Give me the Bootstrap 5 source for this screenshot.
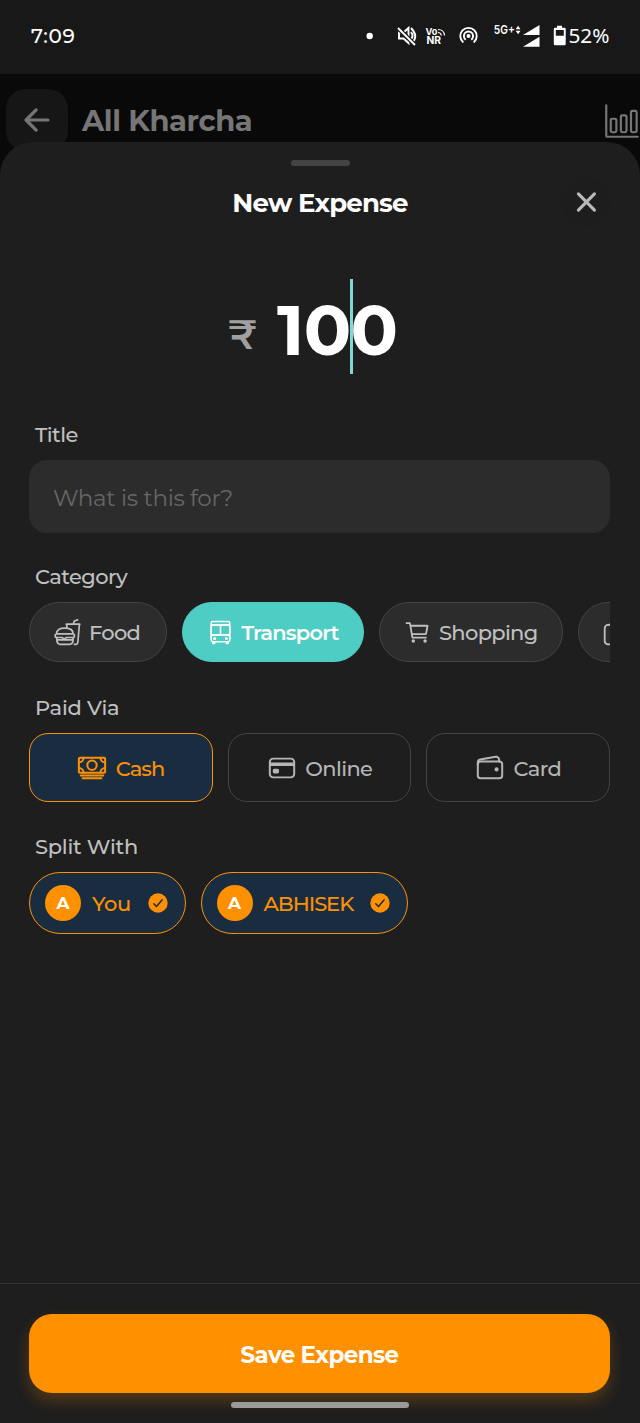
<!DOCTYPE html>
<html lang="en">
<head>
<meta charset="utf-8">
<meta name="viewport" content="width=device-width, initial-scale=1">
<title>New Expense</title>
<link href="https://cdn.jsdelivr.net/npm/bootstrap@5.3.0/dist/css/bootstrap.min.css" rel="stylesheet">
<style>
  body{background:#090909;font-family:Montserrat,Inter,"Noto Sans",sans-serif;color:#c0c0c0;width:640px;height:1423px;overflow:hidden}
  svg{display:block;flex:none}
  .ico{fill:none;stroke:currentColor;stroke-width:34;stroke-linecap:round;stroke-linejoin:round}
  .statusbar{height:74px;background:#181818;color:#fff;font-size:20px;line-height:24px;padding:14px 20px 0 31px}
  .clock{letter-spacing:.65px;font-weight:500;padding-top:10px}
  .topbar{height:68px;padding:15px 0 0 6px;color:#767676}
  .back{width:62px;height:62px;border-radius:20px;background:#161616;color:#767676}
  .page-title{font-size:29px;line-height:64px;font-weight:700;margin-left:14px;letter-spacing:-.38px}
  .sheet{background:#1e1e1e;border-radius:33px 33px 0 0;position:relative}
  .handle{width:59px;height:6px;border-radius:3px;background:#444;margin:18px auto 0}
  .sheet-head{height:48px;margin:12px 30px 0}
  .sheet-title{font-size:26px;line-height:51px;font-weight:700;color:#fff;letter-spacing:-.8px}
  .closer{width:48px;height:48px;background:#1d1d1d;color:#b9b9b9}
  .amount{height:96px;margin-top:53px;padding-left:228px;color:#fff}
  .rupee{font-size:41px;font-weight:600;color:#a0a0a0;line-height:96px;width:49px;padding-top:7px}
  .digits{font-size:70px;line-height:103px;font-weight:700;letter-spacing:-.7px}
  .caret{width:3px;height:95px;background:#80d8d0;top:0}
  .form-area{padding:0 30px 0 29px}
  .lbl{font-size:21px;line-height:30px;font-weight:500;margin:0 0 10px 6px;display:block;letter-spacing:-.55px}
  .lbl.loose{letter-spacing:-.25px}
  .field{height:73px;border-radius:18px;background:#2c2c2c!important;border:0;padding:2px 24px 0;font-size:23px;letter-spacing:-.33px}
  .field::placeholder{color:#666;opacity:1}
  .chips{gap:15px}
  .chip{height:60px;border:1.5px solid #444;background:#2c2c2c;border-radius:30px;padding:1px 0 0 24px;gap:8px;font-size:21px;font-weight:500;color:#c0c0c0;flex:none;letter-spacing:-.68px}
  .chip span{position:relative;top:.5px}
  .pay span{position:relative;top:1px}
  .chip.on{background:#4ecdc4;border-color:#4ecdc4;color:#fff;font-weight:600;letter-spacing:-.78px}
  .pays{gap:15px}
  .pay{height:69px;border:1.5px solid #444;border-radius:19px;gap:8.5px;font-size:21px;font-weight:500;color:#b5b5b5;flex:1 1 0;letter-spacing:-.6px}
  .pay.on,.person{background:#1a2d40;border-color:#ff9100;color:#ff9100}
  .pay.on{letter-spacing:-.9px}
  .person{height:62px;border:1.5px solid #ff9100;border-radius:31px;padding:0 17px 0 15px;font-size:21px;font-weight:500}
  .person .nm{padding-top:1px;letter-spacing:-.3px}
  .person .nm.caps{letter-spacing:-1.05px}
  .avatar{width:36px;height:36px;background:#ff9100;color:#fff;font-size:17px;font-weight:700;margin-right:11px;padding-top:1px}
  .footer-bar{height:140px;border-top:1.5px solid #303030;padding:30px 30px 0 29px}
  .save{height:79px;border-radius:23px;background:#ff9100!important;border:0;color:#fff!important;font-size:23px;font-weight:700;letter-spacing:-.58px;padding:9px 0 6px;box-shadow:0 8px 16px rgba(255,145,0,.24)}
  .homebar{width:178px;height:6px;border-radius:3px;background:#9b9a99;margin:9px auto 0;position:relative;left:.5px}
</style>
</head>
<body class="d-flex flex-column">
<header class="statusbar d-flex flex-shrink-0">
  <span class="clock">7:09</span>
  <svg class="ms-auto" width="254" height="44" viewBox="366 14 254 44" fill="#fff">
    <circle cx="369.7" cy="36" r="3.2"/>
    <g fill="none" stroke="#fff" stroke-width="1.9">
      <path d="M399 32.500h4.500l5-4.500v15l-5-4.500H399z"/>
      <path d="M411 32q3 4 0 7M411 28q8 8 1 15"/>
      <path d="M398 28l17 17" stroke="#181818" stroke-width="4.500"/>
      <path d="M398 28l17 17"/>
      <path d="M463.300 42.400a8.200 8.200 0 1 1 10.400 0M465.700 39.700a4.600 4.600 0 1 1 5.600 0"/>
    </g>
    <circle cx="468.5" cy="36" r="2"/>
    <g font-family="Inter,sans-serif" font-weight="700">
      <text x="425.5" y="34.600" font-size="9.3" textLength="12" lengthAdjust="spacingAndGlyphs">Vo</text>
      <text x="426.400" y="44.300" font-size="9.800" textLength="14.500" lengthAdjust="spacingAndGlyphs">NR</text>
      <text x="493.800" y="34.200" font-size="12" font-weight="600" textLength="21" lengthAdjust="spacingAndGlyphs">5G+</text>
    </g>
    <path d="M438 29.500q6 0 6.500 6M438 32.500q3 0 3.300 3" fill="none" stroke="#fff" stroke-width="1.200"/>
    <path d="M515.700 29.200l2.400-3.400 2.400 3.400zM515.700 30.800l2.400 3.400 2.400-3.400zM523 35h16.500V25zM523 46.800h16.500V36.800z"/>
    <path d="M557 25.700h5v2h2.500q1.200 0 1.200 1.200V44q0 1.200-1.200 1.200h-9.500q-1.200 0-1.200-1.200V28.900q0-1.200 1.200-1.200h2zM555.800 30v5.800h8V30z" fill-rule="evenodd"/>
    <text x="568.500" y="43.200" font-size="20" font-family="Noto Sans,sans-serif" textLength="41" lengthAdjust="spacingAndGlyphs">52%</text>
  </svg>
</header>

<nav class="topbar d-flex align-items-start flex-shrink-0">
  <div class="back d-flex align-items-center justify-content-center flex-shrink-0">
    <svg class="ico" width="36" height="36" viewBox="0 0 512 512" style="stroke-width:46"><path d="M244 400L100 256l144-144M120 256h292"/></svg>
  </div>
  <span class="page-title">All Kharcha</span>
  <svg class="ico ms-auto" style="margin-top:14px;stroke-width:31" width="36" height="36" viewBox="0 0 512 512"><path d="M32 32v432a16 16 0 0016 16h432"/><rect x="96" y="224" width="80" height="192" rx="20"/><rect x="240" y="176" width="80" height="240" rx="20"/><rect x="384" y="112" width="80" height="304" rx="20"/></svg>
</nav>

<main class="sheet d-flex flex-column flex-grow-1">
  <div class="handle flex-shrink-0"></div>
  <div class="sheet-head d-flex flex-shrink-0">
    <div style="width:48px"></div>
    <div class="sheet-title flex-grow-1 text-center">New Expense</div>
    <div class="closer rounded-circle d-flex align-items-center justify-content-center">
      <svg class="ico" width="36" height="36" viewBox="0 0 512 512" style="stroke-width:45"><path d="M376 370L148 142M376 142L148 370"/></svg>
    </div>
  </div>

  <div class="amount d-flex flex-shrink-0">
    <span class="rupee">₹</span>
    <div class="position-relative"><span class="digits">100</span><i class="caret position-absolute" style="right:44px"></i></div>
  </div>

  <div class="form-area" style="margin-top:45px">
    <label class="lbl" for="t">Title</label>
    <input id="t" class="field form-control" placeholder="What is this for?">

    <span class="lbl" style="margin-top:29px">Category</span>
    <div class="chips d-flex overflow-hidden">
      <div class="chip d-flex align-items-center" style="width:137.500px">
        <svg width="27" height="27" viewBox="0 0 27 27" fill="none" stroke="currentColor" stroke-width="1.700" stroke-linecap="round" stroke-linejoin="round"><path d="M12.300 5.200h13.500M19.200 5l1.100-3 3.300-1.100M25.400 5.500l-1.600 18q-.200 1.800-2 1.800h-1.500M12.700 5.500l.300 3.200M2.500 14.800C2.500 10.700 6 9.200 10.800 9.200s8.300 1.500 8.300 5.600zM3 14.800a1.800 1.800 0 0 0 0 3.700h5l2.200 1.700 2.200-1.700h6.200a1.800 1.800 0 0 0 0-3.700M2.800 18.500v2.300h16.300v-2.300M2.800 20.800q0 4.500 3.800 4.500h8.700q3.800 0 3.800-4.500"/></svg>
        <span>Food</span>
      </div>
      <div class="chip on d-flex align-items-center" style="width:182.500px">
        <svg class="ico" width="27" height="27" viewBox="0 0 512 512" style="stroke-width:30"><rect x="80" y="112" width="352" height="192" rx="32"/><rect x="80" y="304" width="352" height="128" rx="32"/><path d="M400 112H112a32 32 0 0 1-32-32 32 32 0 0 1 32-32h288a32 32 0 0 1 32 32 32 32 0 0 1-32 32zM256 112v192M80 80v288M432 80v288M112 432v32h32v-32M368 432v32h32v-32"/><circle cx="144" cy="368" r="14"/><circle cx="368" cy="368" r="14"/></svg>
        <span>Transport</span>
      </div>
      <div class="chip d-flex align-items-center" style="width:184px">
        <svg class="ico" width="27" height="27" viewBox="0 0 512 512"><circle cx="176" cy="416" r="16"/><circle cx="400" cy="416" r="16"/><path d="M48 80h64l48 272h256M160 288h249.440a8 8 0 0 0 7.850-6.430l28.800-144a8 8 0 0 0-7.850-9.570H128"/></svg>
        <span>Shopping</span>
      </div>
      <div class="chip d-flex align-items-center" style="width:140px">
        <svg class="ico" width="27" height="27" viewBox="0 0 512 512"><rect x="32" y="112" width="448" height="368" rx="64"/><path d="M128 112l48-64h160l48 64"/></svg>
      </div>
    </div>

    <span class="lbl loose" style="margin-top:31px">Paid Via</span>
    <div class="pays d-flex">
      <div class="pay on d-flex align-items-center justify-content-center">
        <svg class="ico" width="30" height="30" viewBox="0 0 512 512"><rect x="32" y="80" width="448" height="256" rx="16"/><path d="M64 384h384M96 432h320M480 160a80 80 0 0 1-80-80M32 160a80 80 0 0 0 80-80M480 256a80 80 0 0 0-80 80M32 256a80 80 0 0 1 80 80"/><circle cx="256" cy="208" r="80"/></svg>
        <span>Cash</span>
      </div>
      <div class="pay d-flex align-items-center justify-content-center">
        <svg class="ico" width="30" height="30" viewBox="0 0 512 512"><rect x="48" y="96" width="416" height="320" rx="56"/><path d="M48 192h416M128 300h48v20h-48z" style="stroke-linecap:butt;stroke-width:60"/></svg>
        <span>Online</span>
      </div>
      <div class="pay d-flex align-items-center justify-content-center">
        <svg class="ico" width="30" height="30" viewBox="0 0 512 512"><rect x="48" y="144" width="416" height="288" rx="48"/><path d="M411.400 144v-30A50 50 0 0 0 352 64.900L88.600 109.900A50 50 0 0 0 48 159v49"/><circle cx="368" cy="280" r="18" fill="currentColor"/></svg>
        <span>Card</span>
      </div>
    </div>

    <span class="lbl loose" style="margin-top:30px">Split With</span>
    <div class="chips d-flex">
      <div class="person d-flex align-items-center" style="width:156.500px">
        <span class="avatar rounded-circle d-flex align-items-center justify-content-center">A</span>
        <span class="nm">You</span>
        <svg class="ms-auto" width="20" height="20" viewBox="0 0 20 20"><circle cx="10" cy="10" r="9.700" fill="#ff9100"/><path d="M5.800 10.700l2.700 2.800 5.700-6.800" fill="none" stroke="#1a2d40" stroke-width="1.500" stroke-linecap="round" stroke-linejoin="round"/></svg>
      </div>
      <div class="person d-flex align-items-center" style="width:207.500px">
        <span class="avatar rounded-circle d-flex align-items-center justify-content-center">A</span>
        <span class="nm caps">ABHISEK</span>
        <svg class="ms-auto" width="20" height="20" viewBox="0 0 20 20"><circle cx="10" cy="10" r="9.700" fill="#ff9100"/><path d="M5.800 10.700l2.700 2.800 5.700-6.800" fill="none" stroke="#1a2d40" stroke-width="1.500" stroke-linecap="round" stroke-linejoin="round"/></svg>
      </div>
    </div>
  </div>

  <footer class="footer-bar mt-auto">
    <button class="save btn w-100">Save Expense</button>
    <div class="homebar"></div>
  </footer>
</main>
<script src="https://cdn.jsdelivr.net/npm/bootstrap@5.3.0/dist/js/bootstrap.bundle.min.js"></script>
</body>
</html>
